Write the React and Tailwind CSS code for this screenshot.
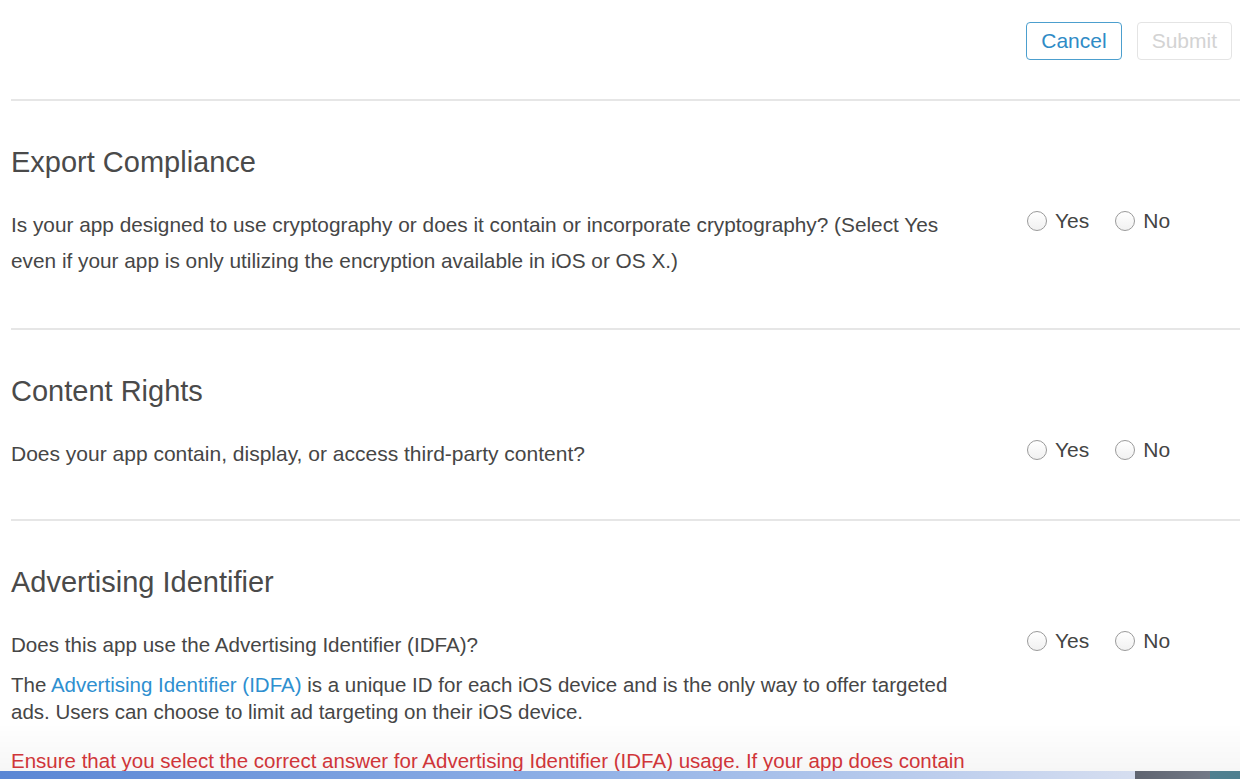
import { useState } from 'react';

const font = { fontFamily: '"Liberation Sans", Arial, sans-serif' };

function Radio({ label, checked, onChange }) {
  return (
    <label className="flex items-center gap-[8px] cursor-pointer text-[21px] text-[#444] leading-none">
      <span
        onClick={onChange}
        className="w-[20px] h-[20px] rounded-full border border-[#9a9a9a] bg-gradient-to-b from-white to-[#f1f1f1] flex items-center justify-center"
      >
        {checked && <span className="w-[10px] h-[10px] rounded-full bg-[#2f8bc6]" />}
      </span>
      {label}
    </label>
  );
}

function YesNo({ value, setValue }) {
  return (
    <div className="flex items-center gap-[26px]">
      <Radio label="Yes" checked={value === 'yes'} onChange={() => setValue('yes')} />
      <Radio label="No" checked={value === 'no'} onChange={() => setValue('no')} />
    </div>
  );
}

function Section({ title, children, value, setValue }) {
  return (
    <section className="border-t-2 border-[#e6e6e6] pt-[43px]">
      <h2 className="text-[29px] leading-[36px] text-[#4a4a4a]">{title}</h2>
      <div className="flex mt-[27px]">
        <div className="w-[975px] shrink-0">{children}</div>
        <div className="ml-[41px] mt-[3px]">
          <YesNo value={value} setValue={setValue} />
        </div>
      </div>
    </section>
  );
}

export default function App() {
  const [crypto, setCrypto] = useState(null);
  const [rights, setRights] = useState(null);
  const [idfa, setIdfa] = useState(null);

  return (
    <div style={font} className="min-h-screen bg-white pl-[11px] text-[#464646]">
      <div className="flex justify-end gap-[15px] pt-[22px] pr-[8px] pb-[39px]">
        <button className="h-[38px] px-[14px] rounded-[4px] border border-[#4c9fce] text-[21px] text-[#2f8bc6] bg-white">
          Cancel
        </button>
        <button disabled className="h-[38px] px-[14px] rounded-[4px] border border-[#e4e4e4] text-[21px] text-[#d3d3d3] bg-white">
          Submit
        </button>
      </div>

      <Section title="Export Compliance" value={crypto} setValue={setCrypto}>
        <p className="text-[20.8px] leading-[36px] pb-[49px]">
          Is your app designed to use cryptography or does it contain or incorporate cryptography? (Select Yes even if your app is only utilizing the encryption available in iOS or OS X.)
        </p>
      </Section>

      <Section title="Content Rights" value={rights} setValue={setRights}>
        <p className="text-[21px] leading-[36px] pb-[47px]">
          Does your app contain, display, or access third-party content?
        </p>
      </Section>

      <Section title="Advertising Identifier" value={idfa} setValue={setIdfa}>
        <p className="text-[20.6px] leading-[36px]">Does this app use the Advertising Identifier (IDFA)?</p>
        <p className="text-[20.5px] leading-[27px] mt-[8px]">
          The <a href="#" className="text-[#2e8fd0]">Advertising Identifier (IDFA)</a> is a unique ID for each iOS device and is the only way to offer targeted ads. Users can choose to limit ad targeting on their iOS device.
        </p>
        <p className="text-[20.5px] leading-[27px] mt-[22px] text-[#d6373b]">
          Ensure that you select the correct answer for Advertising Identifier (IDFA) usage. If your app does contain the Advertising Identifier and you select No, your binary will be rejected.
        </p>
      </Section>

      <div className="fixed left-0 right-0 bottom-0 pointer-events-none">
        <div className="h-[48px] bg-gradient-to-b from-transparent to-[rgba(0,0,0,0.035)]" />
        <div className="h-[8px] flex">
          <div className="flex-1 bg-gradient-to-r from-[#5a86d4] via-[#8fb0e6] to-[#d6def0]" />
          <div className="w-[105px] bg-gradient-to-r from-[#5f6470] to-[#7b8290] flex justify-end">
            <div className="w-[30px] bg-[#4f7f8f]" />
          </div>
        </div>
      </div>
    </div>
  );
}
